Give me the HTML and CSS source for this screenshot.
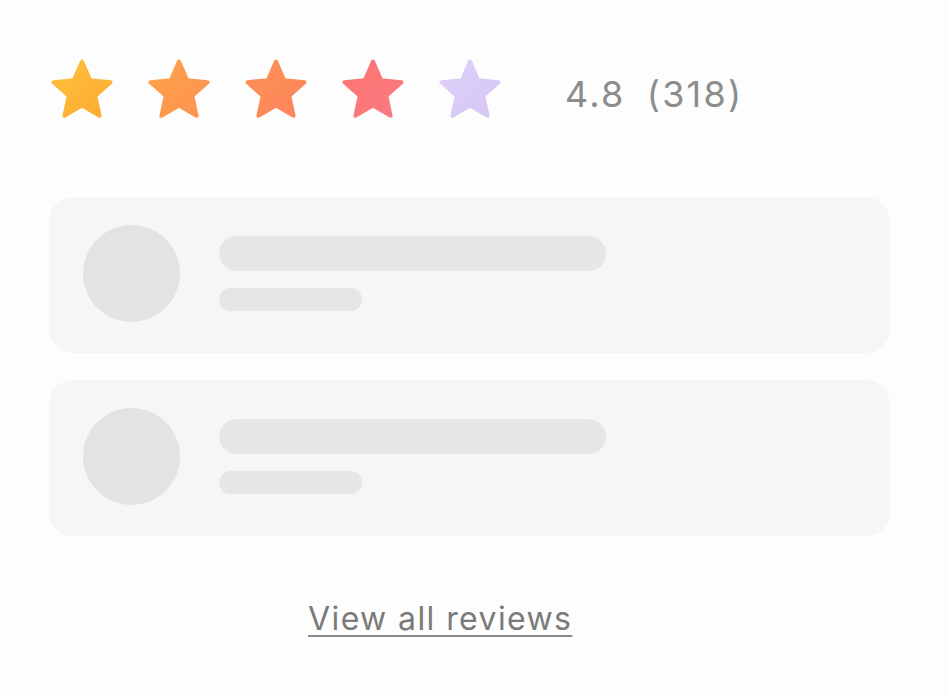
FILE: index.html
```html
<!DOCTYPE html>
<html lang="en">
<head>
  <meta charset="UTF-8">
  <meta name="viewport" content="width=device-width, initial-scale=1.0">
  <title>Reviews</title>
  <link rel="stylesheet" href="styles.css">
</head>
<body>
  <div class="reviews">
    <!-- Rating summary -->
    <div class="rating">
      <div class="stars">
        <svg class="star" viewBox="0 0 64 60">
          <defs>
            <linearGradient id="g1" x1="0" y1="0" x2="1" y2="1">
              <stop offset="0" stop-color="#fec13a"/>
              <stop offset="1" stop-color="#fdaa35"/>
            </linearGradient>
          </defs>
          <polygon fill="url(#g1)" stroke="url(#g1)" points="32,2.5 40.2,21.2 60.5,23.2 45.3,36.8 49.6,56.8 32,46.5 14.4,56.8 18.7,36.8 3.5,23.2 23.8,21.2"/>
        </svg>
        <svg class="star" viewBox="0 0 64 60">
          <defs>
            <linearGradient id="g2" x1="0" y1="0" x2="1" y2="1">
              <stop offset="0" stop-color="#fea24a"/>
              <stop offset="1" stop-color="#fd9250"/>
            </linearGradient>
          </defs>
          <polygon fill="url(#g2)" stroke="url(#g2)" points="32,2.5 40.2,21.2 60.5,23.2 45.3,36.8 49.6,56.8 32,46.5 14.4,56.8 18.7,36.8 3.5,23.2 23.8,21.2"/>
        </svg>
        <svg class="star" viewBox="0 0 64 60">
          <defs>
            <linearGradient id="g3" x1="0" y1="0" x2="1" y2="1">
              <stop offset="0" stop-color="#fe9154"/>
              <stop offset="1" stop-color="#fc855d"/>
            </linearGradient>
          </defs>
          <polygon fill="url(#g3)" stroke="url(#g3)" points="32,2.5 40.2,21.2 60.5,23.2 45.3,36.8 49.6,56.8 32,46.5 14.4,56.8 18.7,36.8 3.5,23.2 23.8,21.2"/>
        </svg>
        <svg class="star" viewBox="0 0 64 60">
          <defs>
            <linearGradient id="g4" x1="0" y1="0" x2="1" y2="1">
              <stop offset="0" stop-color="#fc7470"/>
              <stop offset="1" stop-color="#fa7a82"/>
            </linearGradient>
          </defs>
          <polygon fill="url(#g4)" stroke="url(#g4)" points="32,2.5 40.2,21.2 60.5,23.2 45.3,36.8 49.6,56.8 32,46.5 14.4,56.8 18.7,36.8 3.5,23.2 23.8,21.2"/>
        </svg>
        <svg class="star" viewBox="0 0 64 60">
          <defs>
            <linearGradient id="g5" x1="0" y1="0" x2="1" y2="1">
              <stop offset="0" stop-color="#ddd0f8"/>
              <stop offset="1" stop-color="#d5c7f4"/>
            </linearGradient>
          </defs>
          <polygon fill="url(#g5)" stroke="url(#g5)" points="32,2.5 40.2,21.2 60.5,23.2 45.3,36.8 49.6,56.8 32,46.5 14.4,56.8 18.7,36.8 3.5,23.2 23.8,21.2"/>
        </svg>
      </div>
      <div class="score">4.8 (318)</div>
    </div>

    <!-- Loading placeholders -->
    <div class="review-card">
      <div class="avatar"></div>
      <div class="lines">
        <div class="line line-name"></div>
        <div class="line line-meta"></div>
      </div>
    </div>
    <div class="review-card">
      <div class="avatar"></div>
      <div class="lines">
        <div class="line line-name"></div>
        <div class="line line-meta"></div>
      </div>
    </div>

    <a class="view-all" href="#">View all reviews</a>
  </div>
</body>
</html>
```

FILE: styles.css
```css
body {
  margin: 0;
  padding: 0;
  background-color: #fdfdfd;
  font-family: Inter, "Liberation Sans", Arial, sans-serif;
}
.reviews {
  display: flex;
  flex-direction: column;
  padding: 59px 57px 0 49px;
}
.rating {
  display: flex;
  align-items: flex-start;
  padding-left: 1px;
  margin-bottom: 78px;
}
.stars {
  display: flex;
  gap: 33px;
}
.star {
  width: 64px;
  height: 60px;
}
.star polygon {
  stroke-width: 4;
  stroke-linejoin: round;
}
.score {
  margin-left: 63px;
  margin-top: 15px;
  font-size: 36px;
  line-height: 40px;
  letter-spacing: 2.2px;
  word-spacing: 9px;
  color: #8c8c8c;
}
.review-card {
  display: flex;
  align-items: center;
  padding: 28px 34px 31px;
  margin-bottom: 27px;
  background-color: #f6f6f6;
  border-radius: 24px;
}
.avatar {
  width: 97px;
  height: 97px;
  border-radius: 50%;
  background-color: #e3e3e3;
  flex-shrink: 0;
}
.lines {
  display: flex;
  flex-direction: column;
  gap: 17px;
  margin-left: 39px;
}
.line {
  background-color: #e6e6e6;
  border-radius: 18px;
}
.line-name {
  width: 387px;
  height: 35px;
}
.line-meta {
  width: 143px;
  height: 23px;
  border-radius: 12px;
}
.view-all {
  align-self: flex-start;
  margin-left: 259px;
  margin-top: 36px;
  font-size: 32px;
  line-height: 40px;
  letter-spacing: 1.4px;
  color: #7a7a7a;
  text-decoration: underline;
  text-decoration-thickness: 2px;
  text-underline-offset: 5px;
  text-decoration-color: #8a8a8a;
}
```
